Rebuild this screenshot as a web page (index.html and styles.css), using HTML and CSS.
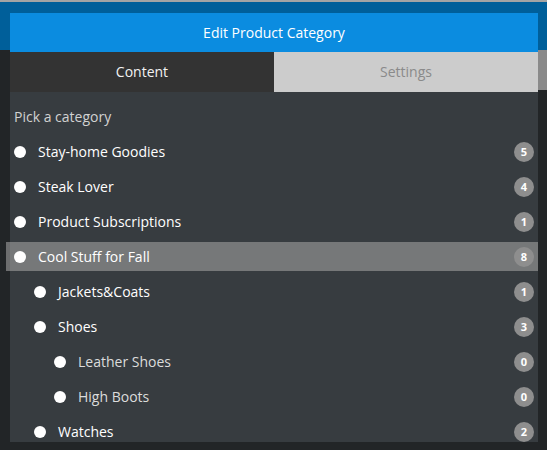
FILE: index.html
```html
<!DOCTYPE html>
<html lang="en">
<head>
  <meta charset="UTF-8" />
  <meta name="viewport" content="width=device-width, initial-scale=1.0"/>
  <title>Edit Product Category</title>
  <link rel="stylesheet" href="styles.css">
</head>
<body>

  <!-- Modal -->
  <div class="modal">
    <div class="modal-header">Edit Product Category</div>

    <div class="tabs">
      <div class="tab active">Content</div>
      <div class="tab">Settings</div>
    </div>

    <div class="modal-body">
      <div class="pick-label">Pick a category</div>

      <ul class="cat-list">
        <li class="cat-row lvl-0"><span class="radio"></span><span class="cat-name">Stay-home Goodies</span><span class="badge">5</span></li>
        <li class="cat-row lvl-0"><span class="radio"></span><span class="cat-name">Steak Lover</span><span class="badge">4</span></li>
        <li class="cat-row lvl-0"><span class="radio"></span><span class="cat-name">Product Subscriptions</span><span class="badge">1</span></li>
        <li class="cat-row lvl-0 hover"><span class="radio"></span><span class="cat-name">Cool Stuff for Fall</span><span class="badge">8</span></li>
        <li class="cat-row lvl-1"><span class="radio"></span><span class="cat-name">Jackets&amp;Coats</span><span class="badge">1</span></li>
        <li class="cat-row lvl-1"><span class="radio"></span><span class="cat-name">Shoes</span><span class="badge">3</span></li>
        <li class="cat-row lvl-2"><span class="radio"></span><span class="cat-name">Leather Shoes</span><span class="badge">0</span></li>
        <li class="cat-row lvl-2"><span class="radio"></span><span class="cat-name">High Boots</span><span class="badge">0</span></li>
        <li class="cat-row lvl-1"><span class="radio"></span><span class="cat-name">Watches</span><span class="badge">2</span></li>
      </ul>
    </div>
  </div>

</body>
</html>
```

FILE: styles.css
```css
html, body {
  height: 100%;
}

body {
  margin: 0;
  box-sizing: border-box;
  border-top: 2px solid #a4a4a4;
  overflow: hidden;
  font-family: 'Open Sans', sans-serif;
  color: #fff;
  background:
    linear-gradient(#8a8a8a, #8a8a8a) right 50px / 9px 40px no-repeat,
    linear-gradient(#005f9a 0, #005f9a 50px, #222527 50px);
}

.modal {
  margin: 11px 9px 0 10px;
  height: 429px;
  display: flex;
  flex-direction: column;
  background: #373c40;
}

.modal-header {
  height: 39px;
  line-height: 39px;
  text-align: center;
  font-size: 14px;
  background: #0b8ce0;
}

.tabs {
  display: flex;
  height: 40px;
}

.tab {
  flex: 1;
  line-height: 40px;
  text-align: center;
  font-size: 14px;
  background: #cccccc;
  color: #8a8a8a;
}

.tab.active {
  background: #333333;
  color: #f2f2f2;
}

.modal-body {
  flex: 1;
  min-height: 0;
  padding: 15px 4px 0 4px;
}

.pick-label {
  font-size: 14px;
  line-height: 20px;
  color: #d2d2d2;
  margin-bottom: 10px;
}

.cat-list {
  list-style: none;
  margin: 0;
  padding: 0;
}

.cat-row {
  display: flex;
  align-items: center;
  height: 29px;
  margin-bottom: 6px;
  font-size: 14px;
  color: #fff;
}

.cat-row.hover {
  margin: 0 -4px 6px -8px;
  padding: 0 4px 0 8px;
  background: rgba(160, 160, 160, 0.6);
}

.radio {
  width: 12px;
  height: 12px;
  border-radius: 50%;
  background: #fff;
  margin-right: 12px;
  flex-shrink: 0;
}

.lvl-1 .radio { margin-left: 20px; }
.lvl-2 .radio { margin-left: 40px; }
.lvl-2 .cat-name { color: #dcdcdc; }

.cat-name {
  flex: 1;
}

.badge {
  width: 20px;
  height: 20px;
  line-height: 20px;
  border-radius: 50%;
  background: #8e8e8e;
  color: #fff;
  text-align: center;
  font-size: 11px;
  font-weight: bold;
}
```
